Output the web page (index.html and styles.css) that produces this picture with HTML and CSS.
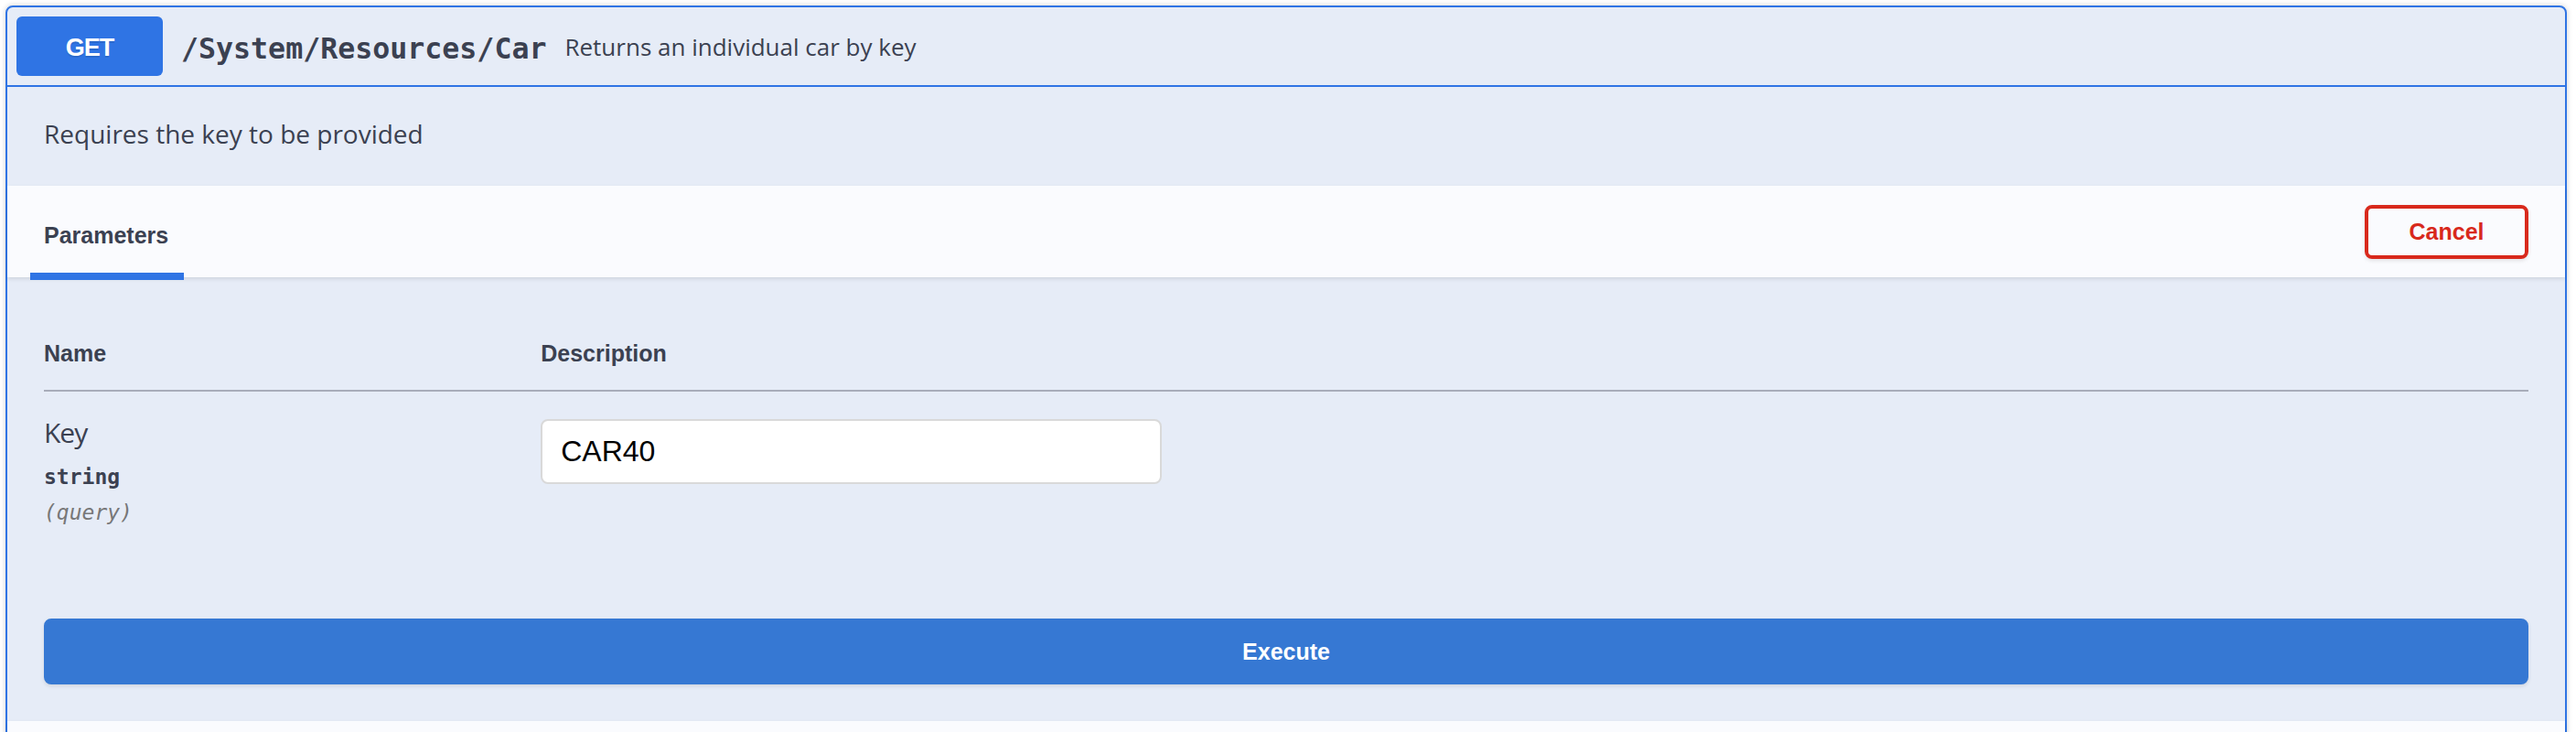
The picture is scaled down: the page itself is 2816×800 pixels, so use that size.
FILE: index.html
```html
<!DOCTYPE html>
<html>
<head>
<meta charset="utf-8">
<title>GET /System/Resources/Car</title>
<link rel="stylesheet" href="styles.css">
</head>
<body>
<div class="page">
  <div class="opblock">
    <div class="summary">
      <span class="method">GET</span>
      <span class="path">/System/Resources/Car</span>
      <span class="summary-desc">Returns an individual car by key</span>
    </div>
    <div class="op-body">
      <div class="desc-wrapper">
        <p>Requires the key to be provided</p>
      </div>
      <div class="section-header">
        <div class="tab-item"><h4>Parameters</h4></div>
        <button class="btn cancel">Cancel</button>
      </div>
      <div class="table-container">
        <table class="parameters">
          <thead>
            <tr>
              <th class="col-name">Name</th>
              <th class="col-desc">Description</th>
            </tr>
          </thead>
          <tbody>
            <tr>
              <td class="col-name">
                <div class="param-name">Key</div>
                <div class="param-type">string</div>
                <div class="param-in">(query)</div>
              </td>
              <td class="col-desc">
                <input class="param-input" type="text" value="CAR40">
              </td>
            </tr>
          </tbody>
        </table>
      </div>
      <div class="execute-wrapper">
        <button class="btn execute">Execute</button>
      </div>
      <div class="section-header responses-header"></div>
    </div>
  </div>
</div>
</body>
</html>
```

FILE: styles.css
```css
* { box-sizing: border-box; }

html, body {
  margin: 0;
  background: #ffffff;
}

.page {
  padding: 6px 10px 0 6px;
}

.opblock {
  border: 2px solid #2f74e4;
  border-radius: 8px;
  background: #e6ecf7;
  box-shadow: 0 0 6px rgba(0, 0, 0, 0.19);
  color: #3b4151;
}

/* summary row */
.summary {
  display: flex;
  align-items: center;
  padding: 10px;
  border-bottom: 2px solid #2f74e4;
}

.method {
  width: 160px;
  height: 65px;
  display: flex;
  align-items: center;
  justify-content: center;
  padding-top: 4px;
  background: #2f74e4;
  color: #ffffff;
  border-radius: 6px;
  font: 700 27px "Liberation Sans", Arial, sans-serif;
  letter-spacing: -1px;
  text-shadow: 0 2px 0 rgba(0, 0, 0, 0.1);
}

.path {
  padding: 5px 20px 0 20px;
  font: 700 31.6px "DejaVu Sans Mono", monospace;
  color: #3b4151;
}

.summary-desc {
  font: 400 26px "Open Sans", sans-serif;
  color: #3b4151;
}

/* description */
.desc-wrapper {
  padding: 27px 40px 33px 40px;
}

.desc-wrapper p {
  margin: 0;
  font: 400 28px/48px "Open Sans", sans-serif;
  color: #3b4151;
}

/* section header (tabs + cancel) */
.section-header {
  display: flex;
  align-items: center;
  justify-content: space-between;
  height: 100px;
  padding: 0 40px;
  background: rgba(255, 255, 255, 0.8);
  box-shadow: 0 2px 4px rgba(0, 0, 0, 0.1);
}

.tab-item {
  position: relative;
  align-self: stretch;
  display: flex;
  align-items: center;
}

.tab-item h4 {
  margin: 0;
  padding-top: 8px;
  font: 700 25px "Liberation Sans", Arial, sans-serif;
  color: #3b4151;
}

.tab-item::after {
  content: "";
  position: absolute;
  left: -15px;
  right: -17px;
  bottom: -3px;
  height: 8px;
  background: #2f74e4;
}

.btn {
  cursor: pointer;
  font: 700 25px "Liberation Sans", Arial, sans-serif;
  border-radius: 8px;
  box-shadow: 0 2px 4px rgba(0, 0, 0, 0.1);
}

.btn.cancel {
  width: 179px;
  height: 59px;
  padding: 0;
  border: 4px solid #d8291c;
  background: transparent;
  color: #d8291c;
}

/* parameters table */
.table-container {
  padding: 40px 40px 40px 40px;
}

.parameters {
  width: 100%;
  border-collapse: collapse;
}

.parameters th {
  text-align: left;
  padding: 25px 0 22px 0;
  font: 700 25px/36px "Liberation Sans", Arial, sans-serif;
  color: #3b4151;
  border-bottom: 2px solid rgba(59, 65, 81, 0.2);
}

.parameters th.col-name,
.parameters td.col-name {
  width: 20%;
}

.parameters td {
  padding: 20px 0 0 0;
  vertical-align: top;
}

.param-name {
  font: 400 30px/50px "Open Sans", sans-serif;
  letter-spacing: -1px;
  color: #3b4151;
}

.param-type {
  font: 700 23px/46px "DejaVu Sans Mono", monospace;
  color: #3b4151;
}

.param-in {
  font: italic 400 23px/32px "DejaVu Sans Mono", monospace;
  color: #777777;
}

.param-input {
  display: block;
  margin: 10px 0 0 0;
  width: 679px;
  height: 71px;
  padding: 0 20px;
  border: 2px solid #d9d9d9;
  border-radius: 8px;
  background: #ffffff;
  font: 400 32px "Liberation Sans", Arial, sans-serif;
  color: #000000;
  outline: none;
}

/* execute */
.execute-wrapper {
  padding: 60px 40px 40px 40px;
}

.btn.execute {
  display: block;
  width: 100%;
  height: 72px;
  padding: 0;
  border: 4px solid #3678d3;
  background: #3678d3;
  color: #ffffff;
}

/* responses */
.responses-header {
  height: 100px;
}
```
